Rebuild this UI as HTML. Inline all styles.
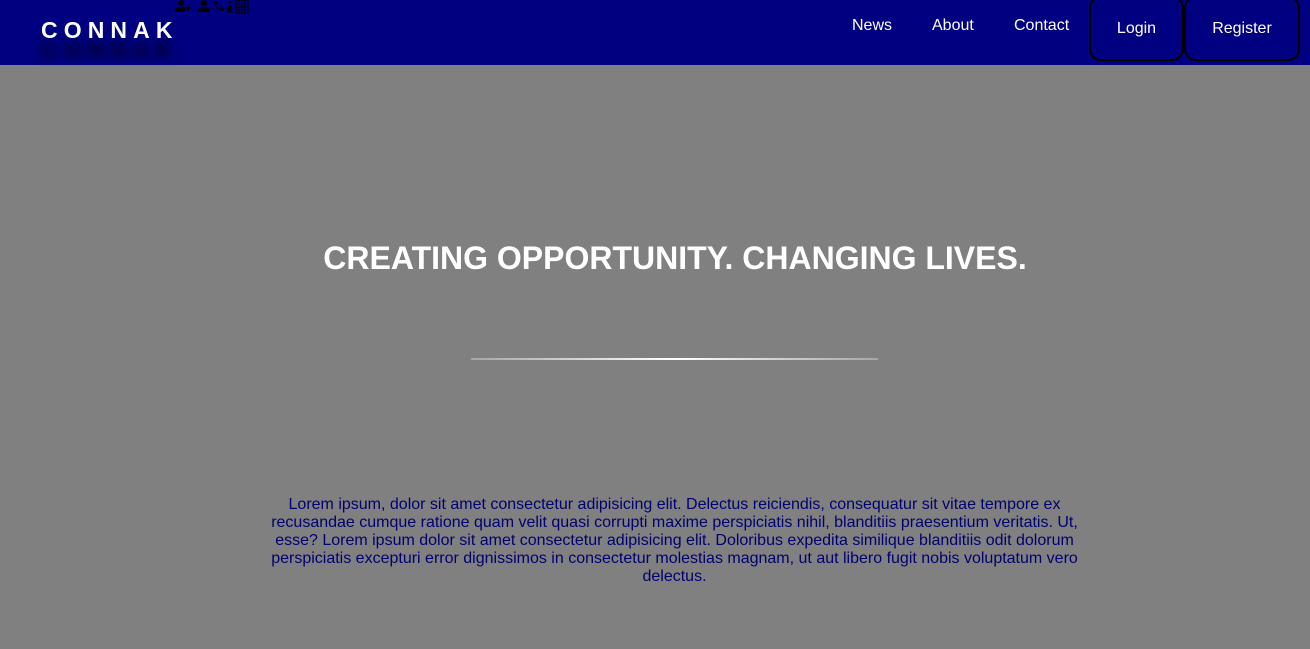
<!DOCTYPE html>
<html><head><meta charset="utf-8"><style>
*{margin:0;padding:0;box-sizing:border-box}
body{width:1310px;height:649px;background:#808080;font-family:"Liberation Sans",Arial,sans-serif;overflow:hidden;position:relative}
header{position:absolute;left:0;top:0;width:1310px;height:65px;background:#000080}
.logo{position:absolute;left:41px;top:17px;color:#fff;font-weight:bold;font-size:23px;letter-spacing:6.1px;text-shadow:0 20px 10px rgba(0,0,0,.8)}
.icons{position:absolute;left:175px;top:0}
.nav a{position:absolute;top:17px;color:#fff;font-size:16px;text-decoration:none}
.btn{position:absolute;top:-4px;height:65px;border:2px solid #000;border-radius:12px;color:#fff;font-size:16px;display:flex;align-items:center;justify-content:center;background:#000080}
h1{position:absolute;left:0;width:1350px;top:240px;text-align:center;color:#fff;font-size:32px;font-weight:bold}
.line{position:absolute;left:471px;top:358px;width:407px;height:2px;background:linear-gradient(90deg,rgba(255,255,255,.3),#fff 50%,rgba(255,255,255,.3))}
p{position:absolute;left:268px;width:813px;top:496px;text-align:center;color:#000070;font-size:16px;line-height:18px}
</style></head><body>
<header>
<div class="logo">CONNAK</div>
<svg class="icons" width="85" height="14" viewBox="0 0 85 14">
<g fill="#000">
<circle cx="6" cy="3" r="3"/><path d="M0 12c0-4 2-5 6-5s5 1 5 5z"/><rect x="10" y="7" width="6" height="1.6"/><rect x="12.2" y="5" width="1.6" height="6"/>
<circle cx="29" cy="3" r="3"/><path d="M23 12c0-4 2-5 6-5s6 1 6 5z"/>
<path d="M39 1l3 0 1 3-2 1c1 2 2 3 4 4l1-2 3 1 0 3c-6 0-10-4-10-10z"/>
<circle cx="55" cy="2" r="1.5"/><rect x="53" y="5" width="3.5" height="7"/><rect x="52" y="11" width="6" height="1.5"/>
<rect x="61" y="0" width="12" height="13" fill="none" stroke="#000" stroke-width="1"/>
<path d="M61 4h12M61 7h12M61 10h12M64 0v13M67 0v13M70 0v13" stroke="#000" stroke-width=".8"/>
</g></svg>
<nav class="nav"><a style="left:852px">News</a><a style="left:932px">About</a><a style="left:1014px">Contact</a></nav>
<div class="btn" style="left:1089px;width:95px">Login</div>
<div class="btn" style="left:1184px;width:116px">Register</div>
</header>
<h1>CREATING OPPORTUNITY. CHANGING LIVES.</h1>
<div class="line"></div>
<p>Lorem ipsum, dolor sit amet consectetur adipisicing elit. Delectus reiciendis, consequatur sit vitae tempore ex recusandae cumque ratione quam velit quasi corrupti maxime perspiciatis nihil, blanditiis praesentium veritatis. Ut, esse? Lorem ipsum dolor sit amet consectetur adipisicing elit. Doloribus expedita similique blanditiis odit dolorum perspiciatis excepturi error dignissimos in consectetur molestias magnam, ut aut libero fugit nobis voluptatum vero delectus.</p>
</body></html>
